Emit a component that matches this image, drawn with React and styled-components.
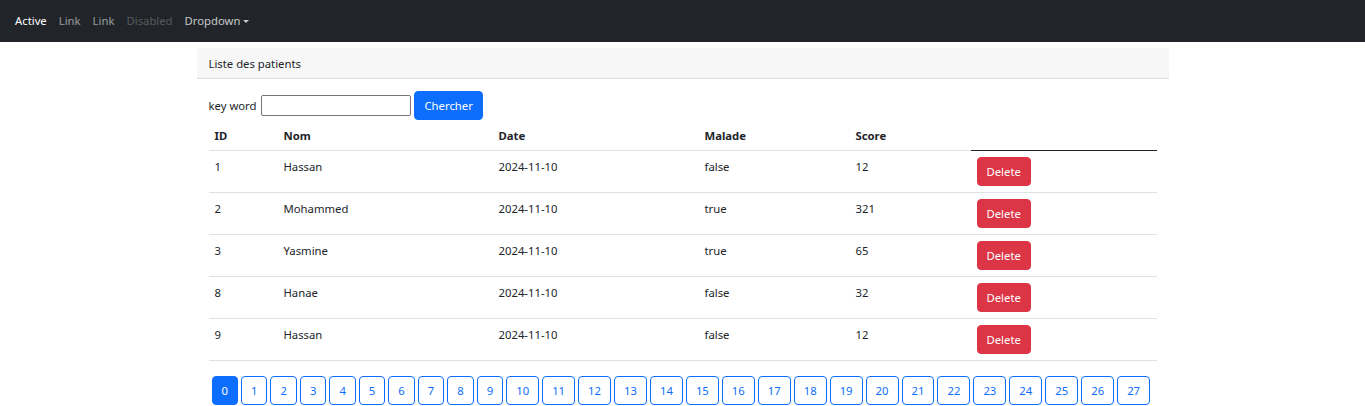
import React, { useState } from 'react'
import styled, { createGlobalStyle } from 'styled-components'

const GlobalStyle = createGlobalStyle`
  body {
    margin: 0;
    font-family: "Noto Sans", "Liberation Sans", Arial, sans-serif;
    font-size: 11.3px;
    line-height: 18px;
    color: #212529;
    background: #fff;
  }
  * { box-sizing: border-box; }
`

const Navbar = styled.nav`
  height: 42px;
  background-color: #212529;
  display: flex;
  align-items: center;
  padding: 0 9px;
`

const navColors = {
  active: '#ffffff',
  link: 'rgba(255, 255, 255, 0.55)',
  disabled: 'rgba(255, 255, 255, 0.25)',
  dropdown: 'rgba(255, 255, 255, 0.75)',
}

const NavLink = styled.a`
  padding: 0 6px;
  color: ${(props) => navColors[props.variant || 'link']};
  text-decoration: none;
  cursor: ${(props) => (props.variant === 'disabled' ? 'default' : 'pointer')};
  display: flex;
  align-items: center;
`

const Caret = styled.span`
  display: inline-block;
  margin-left: 3px;
  border-top: 3.5px solid currentColor;
  border-left: 3.5px solid transparent;
  border-right: 3.5px solid transparent;
`

const Container = styled.div`
  width: 990px;
  margin: 6px auto 0;
  padding: 0 9px;
`

const Card = styled.div`
  border-radius: 4px;
`

const CardHeader = styled.div`
  padding: 7px 12px 5px;
  background-color: #f7f7f7;
  border-bottom: 1px solid #dcdcdc;
  border-radius: 4px 4px 0 0;
`

const CardBody = styled.div`
  padding: 12px;
`

const SearchForm = styled.form`
  display: flex;
  align-items: center;
`

const Label = styled.label`
  margin-right: 5px;
`

const Input = styled.input`
  width: 150px;
  height: 21px;
  border: 1px solid #767676;
  border-radius: 2px;
  font: inherit;
  padding: 0 3px;
`

const Button = styled.button`
  font: inherit;
  line-height: 18px;
  height: 29px;
  padding: 0 9px;
  border-radius: 4px;
  border: 1px solid ${(props) => props.color};
  background-color: ${(props) => (props.outline ? '#fff' : props.color)};
  color: ${(props) => (props.outline ? props.color : '#fff')};
  margin-left: ${(props) => props.ml || 0}px;
  cursor: pointer;
`

const Row = styled.div`
  display: grid;
  grid-template-columns: 69px 215px 206px 151px 121px 1fr;
`

const Cell = styled.div`
  padding: 6px;
  padding-top: ${(props) => (props.head ? 7 : 7)}px;
  padding-bottom: ${(props) => (props.head ? 5 : 5)}px;
  border-bottom: 1px solid ${(props) => (props.dark ? '#212529' : '#dee2e6')};
  font-weight: ${(props) => (props.head ? 700 : 400)};
`

const ActionCell = styled(Cell)`
  padding-top: 6px;
  padding-bottom: 6px;
`

const Pagination = styled.div`
  display: flex;
  margin-top: 15px;
`

const patients = [
  { id: 1, nom: 'Hassan', date: '2024-11-10', malade: 'false', score: 12 },
  { id: 2, nom: 'Mohammed', date: '2024-11-10', malade: 'true', score: 321 },
  { id: 3, nom: 'Yasmine', date: '2024-11-10', malade: 'true', score: 65 },
  { id: 8, nom: 'Hanae', date: '2024-11-10', malade: 'false', score: 32 },
  { id: 9, nom: 'Hassan', date: '2024-11-10', malade: 'false', score: 12 },
]

const App = () => {
  const [page, setPage] = useState(0)
  const [keyword, setKeyword] = useState('')
  const pages = Array.from({ length: 28 }, (_, i) => i)

  return (
    <>
      <GlobalStyle />
      <Navbar>
        <NavLink variant="active">Active</NavLink>
        <NavLink>Link</NavLink>
        <NavLink>Link</NavLink>
        <NavLink variant="disabled">Disabled</NavLink>
        <NavLink variant="dropdown">
          Dropdown
          <Caret />
        </NavLink>
      </Navbar>
      <Container>
        <Card>
          <CardHeader>Liste des patients</CardHeader>
          <CardBody>
            <SearchForm onSubmit={(e) => e.preventDefault()}>
              <Label>key word</Label>
              <Input value={keyword} onChange={(e) => setKeyword(e.target.value)} />
              <Button color="#0d6efd" ml={3}>
                Chercher
              </Button>
            </SearchForm>
            <Row>
              <Cell head>ID</Cell>
              <Cell head>Nom</Cell>
              <Cell head>Date</Cell>
              <Cell head>Malade</Cell>
              <Cell head>Score</Cell>
              <Cell dark />
            </Row>
            {patients.map((p) => (
              <Row key={p.id}>
                <Cell>{p.id}</Cell>
                <Cell>{p.nom}</Cell>
                <Cell>{p.date}</Cell>
                <Cell>{p.malade}</Cell>
                <Cell>{p.score}</Cell>
                <ActionCell>
                  <Button color="#dc3545">Delete</Button>
                </ActionCell>
              </Row>
            ))}
            <Pagination>
              {pages.map((n) => (
                <Button
                  key={n}
                  color="#0d6efd"
                  outline={n !== page}
                  ml={3}
                  onClick={() => setPage(n)}
                >
                  {n}
                </Button>
              ))}
            </Pagination>
          </CardBody>
        </Card>
      </Container>
    </>
  )
}

export default App
